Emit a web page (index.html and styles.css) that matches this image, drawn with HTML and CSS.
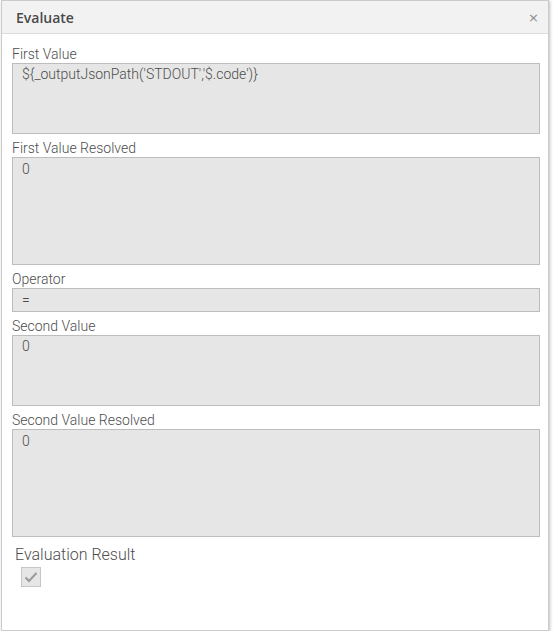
FILE: index.html
```html
<!DOCTYPE html>
<html>
<head>
<meta charset="utf-8">
<link rel="stylesheet" href="styles.css">
</head>
<body>
<div class="dialog">
  <div class="dialog-header">
    <span class="dialog-title">Evaluate</span>
    <span class="dialog-close">×</span>
  </div>
  <div class="dialog-body">
    <div class="field">
      <label class="field-label">First Value</label>
      <div class="field-box box-md">${_outputJsonPath('STDOUT','$.code')}</div>
    </div>
    <div class="field">
      <label class="field-label">First Value Resolved</label>
      <div class="field-box box-lg">0</div>
    </div>
    <div class="field">
      <label class="field-label">Operator</label>
      <div class="field-box box-sm">=</div>
    </div>
    <div class="field">
      <label class="field-label">Second Value</label>
      <div class="field-box box-md">0</div>
    </div>
    <div class="field">
      <label class="field-label">Second Value Resolved</label>
      <div class="field-box box-lg">0</div>
    </div>
    <div class="result">
      <div class="result-label">Evaluation Result</div>
      <div class="checkbox">
        <svg width="14" height="12" viewBox="0 0 14 12"><path d="M1.5 6.5 L5 10 L12.5 2" fill="none" stroke="#9a9a9a" stroke-width="2"/></svg>
      </div>
    </div>
  </div>
</div>
</body>
</html>
```
FILE: styles.css
```css
html, body {
  margin: 0;
  padding: 0;
  background: #ffffff;
}
body {
  font-family: Roboto, "Liberation Sans", sans-serif;
}
.dialog {
  margin-left: 1px;
  width: 548px;
  height: 631px;
  box-sizing: border-box;
  border: 1px solid #cbcbcb;
  background: #fff;
  box-shadow: 1px 1px 3px rgba(0,0,0,0.25);
}
.dialog-header {
  height: 33px;
  box-sizing: border-box;
  background: #f2f2f2;
  border-bottom: 1px solid #dcdcdc;
  display: flex;
  align-items: center;
  justify-content: space-between;
  padding: 0 9px 0 14px;
}
.dialog-title {
  font-family: "Open Sans", sans-serif;
  font-weight: 600;
  font-size: 14px;
  color: #4a4a4a;
}
.dialog-close {
  font-family: "DejaVu Sans", sans-serif;
  font-size: 13px;
  color: #8a8a8a;
}
.dialog-body {
  padding: 10px 8px 0 10px;
  display: flex;
  flex-direction: column;
}
.field {
  display: flex;
  flex-direction: column;
  margin-bottom: 4px;
}
.field-label {
  font-size: 14px;
  font-weight: 300;
  line-height: 16px;
  color: #4d4d4d;
  margin-top: -1px;
  padding-top: 3px;
  margin-bottom: 1px;
}
.field-box {
  box-sizing: border-box;
  background: #e6e6e6;
  border: 1px solid #bdbdbd;
  font-size: 14px;
  font-weight: 300;
  color: #4d4d4d;
  padding: 2px 9px;
  line-height: 16px;
}
.box-sm { height: 24px; padding-top: 3px; }
.box-md { height: 71px; }
.box-lg { height: 108px; padding-top: 3px; }
.result {
  display: flex;
  flex-direction: column;
  padding-left: 3px;
  margin-top: 5px;
}
.result-label {
  font-size: 16px;
  font-weight: 300;
  color: #4d4d4d;
  line-height: 18px;
}
.checkbox {
  margin-top: 3px;
  margin-left: 6px;
  width: 20px;
  height: 20px;
  box-sizing: border-box;
  background: #e6e6e6;
  border: 1px solid #c6c6c6;
  display: flex;
  align-items: center;
  justify-content: center;
}
```
